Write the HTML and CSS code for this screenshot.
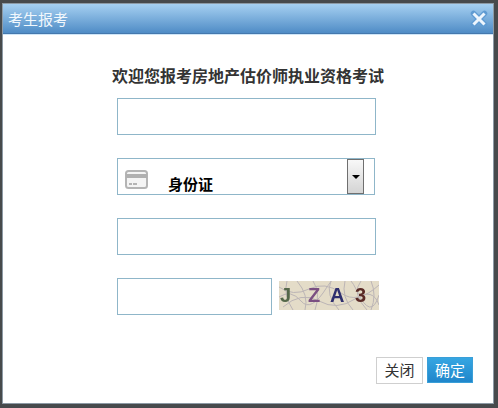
FILE: index.html
```html
<!DOCTYPE html>
<html lang="zh-CN">
<head>
  <meta charset="UTF-8">
  <title>考生报考</title>
  <link rel="stylesheet" href="styles.css">
</head>
<body>
  <div class="dialog">
    <div class="dialog-title">
      <span>考生报考</span>
      <svg class="close-icon" width="18" height="18" viewBox="0 0 18 18">
        <path d="M3.5 3.5 L14.5 14.5 M14.5 3.5 L3.5 14.5" stroke="#5f9bd2" stroke-width="5.5" stroke-linecap="round"/>
        <path d="M3.5 3.5 L14.5 14.5 M14.5 3.5 L3.5 14.5" stroke="#eef6fd" stroke-width="3"/>
      </svg>
    </div>
    <div class="dialog-body">
      <h2>欢迎您报考房地产估价师执业资格考试</h2>
      <div class="form">
        <div class="field"></div>
        <div class="field field-select">
          <svg class="card-icon" width="23" height="19" viewBox="0 0 23 19">
            <rect x="1" y="1" width="21" height="17" rx="2.5" fill="#f4f4f4" stroke="#b4b4b4" stroke-width="2"/>
            <rect x="1" y="4" width="21" height="4" fill="#b0b0b0"/>
            <rect x="4" y="13" width="3" height="2" fill="#b4b4b4"/>
            <rect x="8" y="13" width="4" height="2" fill="#b4b4b4"/>
          </svg>
          <span class="select-text">身份证</span>
          <div class="select-arrow"><i></i></div>
        </div>
        <div class="field"></div>
        <div class="captcha-row">
          <div class="field field-short"></div>
          <div class="captcha">
            <svg class="captcha-noise" width="100" height="29" viewBox="0 0 100 29">
              <path d="M0 6 Q14 16 30 8 T62 12 T100 4 M4 26 Q22 10 40 20 T76 18 T100 24 M18 0 Q30 14 26 29 M52 0 Q46 14 60 29 M82 0 Q72 12 88 29 M0 16 Q12 8 22 20 T48 6 T78 10 T100 14 M34 0 Q42 12 36 29 M66 0 Q62 16 74 29 M8 0 Q4 14 14 29 M92 0 Q98 14 92 29" fill="none" stroke="#bcb5b6" stroke-width="1"/>
            </svg>
            <span class="c1">J</span><span class="c2">Z</span><span class="c3">A</span><span class="c4">3</span>
          </div>
        </div>
      </div>
      <div class="actions">
        <button class="btn btn-close">关闭</button>
        <button class="btn btn-ok">确定</button>
      </div>
    </div>
  </div>
</body>
</html>
```

FILE: styles.css
```css
* {
  box-sizing: border-box;
}

body {
  margin: 0;
  height: 408px;
  overflow: hidden;
  background-color: #474a4c;
  padding: 3px 4px 3px 2px;
  font-family: "Liberation Sans", "Noto Sans CJK SC", sans-serif;
}

.dialog {
  height: 401px;
  border: 1px solid #8d9aa5;
  background-color: #fff;
  display: flex;
  flex-direction: column;
}

.dialog-title {
  height: 30px;
  flex: none;
  display: flex;
  justify-content: space-between;
  align-items: center;
  padding: 0 5px 0 5px;
  color: #f2f8fd;
  font-size: 15px;
  background: linear-gradient(#a6d0f1, #4f8cc6);
  border-bottom: 1px solid #4478ad;
  box-shadow: 0 1px 0 #cfe6f8;
}

.dialog-body {
  flex: 1;
  padding: 31px 20px 19px 114px;
  display: flex;
  flex-direction: column;
}

h2 {
  margin: 0 0 9px -114px;
  width: 490px;
  text-align: center;
  font-size: 16px;
  line-height: 24px;
  font-weight: bold;
  color: #333;
}

.form {
  flex: 1;
  display: flex;
  flex-direction: column;
  gap: 23px;
}

.field {
  width: 259px;
  height: 37px;
  border: 1px solid #8fb6c9;
  background-color: #fff;
}

.field-select {
  width: 258px;
  display: flex;
  align-items: center;
  padding-left: 7px;
  position: relative;
}

.card-icon {
  flex: none;
  margin-top: 5px;
}

.select-text {
  margin: 13px 0 0 20px;
  font-size: 15px;
  font-weight: bold;
  color: #000;
}

.select-arrow {
  position: absolute;
  top: 0;
  right: 10px;
  width: 17px;
  height: 35px;
  border: 1px solid #6f6f6f;
  background: linear-gradient(#f8f8f8, #d4d4d4);
  display: flex;
  align-items: center;
  justify-content: center;
}

.select-arrow i {
  border-top: 4px solid #000;
  border-left: 4px solid transparent;
  border-right: 4px solid transparent;
}

.captcha-row {
  display: flex;
  align-items: center;
  gap: 7px;
}

.field-short {
  width: 155px;
}

.captcha {
  width: 100px;
  height: 29px;
  margin-bottom: 2px;
  position: relative;
  background-color: #e4dcc8;
  font-family: "Liberation Sans", sans-serif;
  font-size: 20px;
  font-weight: bold;
  line-height: 29px;
  filter: blur(0.4px);
}

.captcha-noise {
  position: absolute;
  top: 0;
  left: 0;
}

.captcha span {
  position: absolute;
  top: 0;
}

.c1 { left: 1px; color: #55684a; }
.c2 { left: 29px; color: #7b4f82; }
.c3 { left: 51px; color: #2f2f6e; }
.c4 { left: 76px; color: #5a2a26; }

.actions {
  display: flex;
  justify-content: flex-end;
  gap: 4px;
}

.btn {
  width: 46px;
  height: 26px;
  padding: 0 0 2px;
  font-family: inherit;
  font-size: 15px;
  border-radius: 0;
}

.btn-close {
  width: 47px;
  height: 27px;
  background-color: #fff;
  border: 1px solid #cfcfcf;
  color: #333;
}

.btn-ok {
  background: linear-gradient(#36a6e2, #1f86cb);
  border: 1px solid #3a9fd8;
  color: #fff;
}
```
